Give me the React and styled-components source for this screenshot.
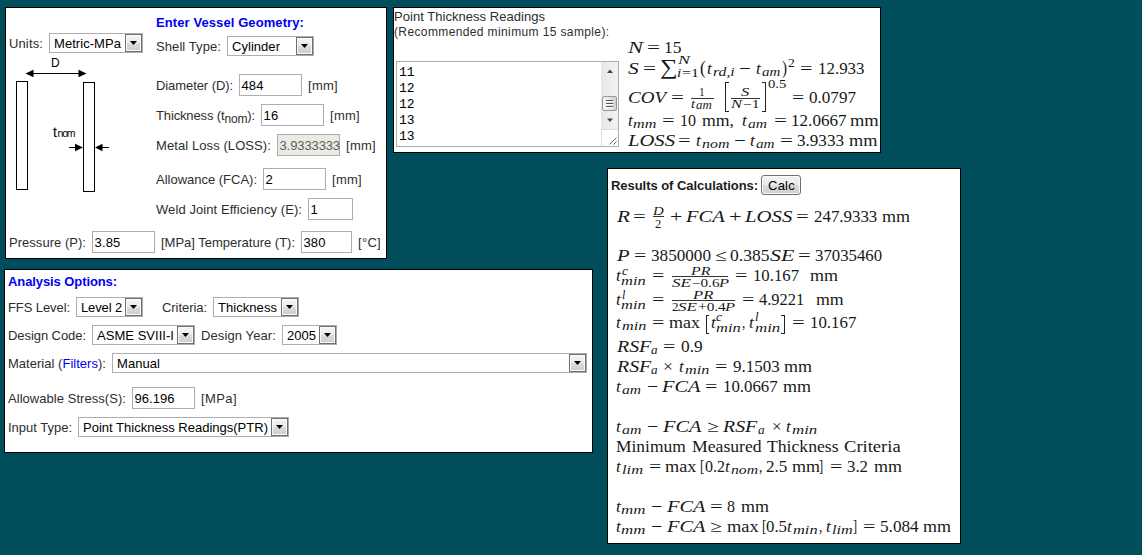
import React, { useLayoutEffect, useRef, useState } from "react";
import styled, { createGlobalStyle, css } from "styled-components";

const GlobalStyle = createGlobalStyle`
  body {
    margin: 0;
    background: #004d5c;
    font-family: "Liberation Sans", Arial, sans-serif;
    font-size: 13px;
    line-height: 16px;
    color: #2e2e2e;
  }
  * { box-sizing: border-box; }
`;

/* ---------- page and panels ---------- */

const Page = styled.main`
  display: grid;
  grid-template-columns: 388px 214px 354px;
  grid-template-rows: 161px 101px 275px;
  width: 1142px;
  height: 555px;
  padding: 7px 0 0 5px;
  align-items: start;
  justify-items: start;
  overflow: hidden;
`;

const Panel = styled.section`
  border: 1px solid #000;
  background: #fff;
`;

const GeometryPanel = styled(Panel)`
  grid-area: 1 / 1 / 3 / 2;
  width: 382px;
  height: 252px;
  padding-left: 3px;
`;

const ReadingsPanel = styled(Panel)`
  grid-area: 1 / 2 / 2 / 4;
  display: flex;
  width: 488px;
  height: 146px;
`;

const OptionsPanel = styled(Panel)`
  grid-area: 3 / 1 / 4 / 3;
  width: 589px;
  height: 184px;
  margin-left: -1px;
  padding: 3px 0 0 3px;
`;

const ResultsPanel = styled(Panel)`
  grid-area: 2 / 3 / 4 / 4;
  width: 354px;
  height: 376px;
  padding-left: 3px;
`;

const Columns = styled.div`
  display: flex;
`;

const SketchColumn = styled.div`
  width: 147px;
  padding-top: 25px;
`;

const FieldColumn = styled.div`
  flex: 1;
  padding-top: 6px;
`;

const Row = styled.div`
  display: flex;
  align-items: center;
  gap: ${(p) => p.$gap || 6}px;
  height: ${(p) => p.$h || 22}px;
  margin-top: ${(p) => p.$mt || 0}px;
`;

/* ---------- fitted text ---------- */

const FitBox = styled.span`
  display: inline-block;
  flex: none;
  width: ${(p) => p.$w}px;
  padding-top: ${(p) => (p.$flat ? 0 : 2)}px;
  white-space: nowrap;
  text-align: left;
`;

const FitInner = styled.span`
  display: inline-block;
  transform-origin: 0 50%;
  white-space: pre;
`;

/* Spreads a run of text over a given width, by tracking or by stretching. */
function Fit({ w, stretch, className, children }) {
  const ref = useRef(null);
  const [style, setStyle] = useState({});
  useLayoutEffect(() => {
    const natural = ref.current.offsetWidth
      ? ref.current.getBoundingClientRect().width
      : w;
    const count = ref.current.textContent.length;
    setStyle(
      stretch
        ? { transform: `scaleX(${w / natural})` }
        : { letterSpacing: `${(w - natural) / count}px` }
    );
  }, [w, stretch]);
  return (
    <FitBox $w={w} $flat={stretch} className={className}>
      <FitInner ref={ref} style={style}>{children}</FitInner>
    </FitBox>
  );
}

const Label = styled(Fit)``;

const Heading = styled(Fit)`
  font-weight: bold;
  color: #0000ee;
`;

const DarkHeading = styled(Fit)`
  font-weight: bold;
  color: #1c1c1c;
`;

const ReadingsTitle = styled(Fit)`
  height: 16px;
  padding-top: 1px;
`;

const SmallLabel = styled(Fit)`
  height: 16px;
  padding-top: 0;
  font-size: 12px;
`;

const Sub = styled.sub`
  font-size: 12px;
  line-height: 0;
  vertical-align: -3px;
`;

const FilterLink = styled.span`
  color: #0000ee;
`;

/* ---------- controls ---------- */

const Field = styled.span`
  display: flex;
  align-items: center;
  flex: none;
  width: ${(p) => p.$w}px;
  height: 22px;
  padding-left: 1.5px;
  border: 1px solid #abadb3;
  background: ${(p) => (p.$off ? "#ebebe4" : "#fff")};
  color: ${(p) => (p.$off ? "#5c5c5c" : "#000")};
`;

const SelectBox = styled.span`
  display: flex;
  align-items: center;
  justify-content: space-between;
  flex: none;
  width: ${(p) => p.$w}px;
  height: 20px;
  padding-left: 4px;
  border: 1px solid #abadb3;
  background: #fff;
  color: #000;
`;

const SelectButton = styled.span`
  display: flex;
  align-items: center;
  justify-content: center;
  width: 17px;
  height: 18px;
  border: 1px solid #707070;
  background: linear-gradient(#f3f3f3, #ebebeb 50%, #dcdcdc 50%, #cdcdcd);
  box-shadow: inset 0 0 0 1px #fafafa;
`;

const CalcButton = styled.button`
  width: 40px;
  height: 20px;
  padding: 0 0 0 6px;
  border: 1px solid #707070;
  border-radius: 3px;
  background: linear-gradient(#f3f3f3, #ebebeb 50%, #dcdcdc 50%, #cfcfcf);
  box-shadow: inset 0 0 0 1px #fafafa;
  color: #000;
  font: 13px/16px "Liberation Sans", Arial, sans-serif;
  text-align: left;
`;

function TextField({ w, tw, value, off }) {
  return (
    <Field $w={w} $off={off}>
      <Fit w={tw}>{value}</Fit>
    </Field>
  );
}

function Select({ w, tw, value }) {
  return (
    <SelectBox $w={w}>
      <Fit w={tw}>{value}</Fit>
      <SelectButton>
        <svg width="7" height="4" viewBox="0 0 7 4">
          <path d="M0 0h7L3.5 4z" fill="#000" />
        </svg>
      </SelectButton>
    </SelectBox>
  );
}

const Spacer = styled.span`
  width: ${(p) => p.$w}px;
`;

/* ---------- readings list ---------- */

const ReadingsColumn = styled.div`
  display: flex;
  flex-direction: column;
  width: 234px;
`;

const ReadingsBox = styled.div`
  display: flex;
  justify-content: space-between;
  width: 223px;
  height: 86px;
  margin: 21px 0 0 2px;
  border: 1px solid #abadb3;
`;

const ReadingsText = styled.div`
  padding: 3px 0 0 2px;
  font: 13px/16px "Liberation Mono", "Courier New", monospace;
  color: #000;
`;

const ScrollColumn = styled.div`
  width: 17px;
  height: 84px;
  display: flex;
  flex-direction: column;
`;

const ScrollTrack = styled.div`
  display: flex;
  flex-direction: column;
  align-items: center;
  height: 67px;
  background: linear-gradient(90deg, #e6e6e6, #f3f3f3);
`;

const ScrollArrow = styled.div`
  display: flex;
  align-items: flex-start;
  justify-content: center;
  height: ${(p) => p.$h}px;
  padding-top: 7px;
`;

const ScrollThumb = styled.div`
  display: flex;
  flex-direction: column;
  justify-content: center;
  align-items: center;
  gap: 1px;
  width: 15px;
  height: 15px;
  border: 1px solid #979797;
  border-radius: 2px;
  background: linear-gradient(90deg, #f5f5f5, #e6e6e6 50%, #cfcfcf);
`;

const Grip = styled.span`
  width: 7px;
  height: 2px;
  border-top: 1px solid #555;
  border-bottom: 1px solid #fff;
`;

const ResizeCorner = styled.div`
  display: flex;
  align-items: flex-end;
  justify-content: flex-end;
  height: 17px;
  padding: 0 1px 1px 0;
  border-top: 1px solid #dcdcdc;
  border-left: 1px solid #dcdcdc;
`;

/* ---------- formulas ---------- */

const FormulaBlock = styled.div`
  padding: ${(p) => p.$pad};
  font-family: "Liberation Serif", "Times New Roman", serif;
  font-size: 16.5px;
  color: #181818;
`;

/* Each line box has room for raised parts; neighbours share that room. */
const FormulaLine = styled.div`
  height: 44px;
  line-height: 44px;
  margin-top: ${(p) => p.$step - 44}px;
  white-space: nowrap;
`;

const Piece = styled.span`
  display: inline-block;
  width: ${(p) => p.$w}px;
  margin-left: ${(p) => p.$gap}px;
  vertical-align: ${(p) => p.$raise}px;
  line-height: 0;
`;

const Glyphs = styled(Fit)`
  ${(p) => p.$kind.includes("i") && css`font-style: italic;`}
  ${(p) => p.$kind.includes("s") && css`font-size: 11.5px;`}
  ${(p) => p.$kind.includes("S") && css`font-size: 21px;`}
  ${(p) => p.$kind.includes("B") && css`font-size: 19.5px;`}
`;

const Bar = styled.span`
  display: block;
  height: 1px;
  background: #333;
`;

/* The negative margin keeps a tall delimiter from growing its line. */
const Bracket = styled.span`
  display: block;
  height: ${(p) => p.$h}px;
  margin-top: -${(p) => p.$h}px;
  border: solid #222;
  border-width: ${(p) => (p.$open ? "1px 0 1px 1px" : "1px 1px 1px 0")};
`;

/* A formula is a list of [text, start, end, kind, raise].
   kind: i italic, s script size, S sum sign, B taller delimiter,
   "bar" a fraction rule, "[" and "]" the large delimiters. */
function Formula({ step, parts }) {
  let cursor = 0;
  return (
    <FormulaLine $step={step}>
      {parts.map(([text, start, end, kind = "", raise = 0], i) => {
        const drawn = kind === "bar" || kind === "[" || kind === "]";
        const pad = drawn ? 0 : 0.5;
        const gap = start - pad - cursor;
        const w = end - start + pad * 2;
        cursor = end + pad;
        return (
          <Piece key={i} $w={w} $gap={gap} $raise={raise}>
            {kind === "bar" && <Bar />}
            {(kind === "[" || kind === "]") && <Bracket $h={text} $open={kind === "["} />}
            {!drawn && <Glyphs w={w} stretch $kind={kind}>{text}</Glyphs>}
          </Piece>
        );
      })}
    </FormulaLine>
  );
}

const t = (x) => ["t", x, x + 3.8, "i"];
const RSFa = (x) => [["RSF", x, x + 33.3, "i"], ["a", x + 34.7, x + 40.3, "is", -2]];

const statistics = [
  { step: 16, parts: [["N", 0, 14, "i"], ["=", 19.5, 31.5], ["15", 36.5, 53]] },
  { step: 20.5, parts: [
    ["S", 0, 9.7, "i"], ["=", 15.3, 27.3], ["∑", 32.7, 49.3, "S"],
    ["N", 50.3, 61.3, "is", 9.5], ["i", 49.7, 53, "is", -3.5], ["=1", 55, 71, "s", -3.5],
    ["(", 73, 77.7, "B"], t(79.5), ["rd,i", 85.3, 106, "is", -2], ["−", 112, 122.7],
    t(128.7), ["am", 134.5, 151.8, "is", -2], [")", 154.7, 158.7, "B"],
    ["2", 160.7, 166.5, "s", 7], ["=", 173, 184.5], ["12.933", 190.5, 236]] },
  { step: 29, parts: [
    ["COV", 0, 37, "i"], ["=", 43.5, 55.5], ["", 62.7, 86, "bar", 4],
    ["1", 72, 76.7, "s", 7], ["t", 63.7, 66.7, "is", -5.5], ["am", 68.3, 83, "is", -6.5],
    [30, 96.7, 100.7, "[", -9], ["", 103, 131.7, "bar", 4], ["S", 113.7, 121, "is", 7],
    ["N", 103.7, 113.7, "is", -5], ["−1", 115.7, 131.3, "s", -5], [30, 133.7, 137.7, "]", -9],
    ["0.5", 141, 158.3, "s", 15], ["=", 164.7, 176], ["0.0797", 181.3, 227.3]] },
  { step: 23.5, parts: [
    t(0), ["mm", 5.7, 28, "is", -2], ["=", 34.7, 46.3], ["10", 52.7, 67.7],
    ["mm,", 74.3, 105.3], t(115), ["am", 120.7, 138.7, "is", -2], ["=", 146.3, 158.3],
    ["12.0667", 163.7, 218.3], ["mm", 223, 250.7]] },
  { step: 20, parts: [
    ["LOSS", 0, 46, "i"], ["=", 50.7, 62.3], t(69), ["nom", 74.3, 100.7, "is", -2],
    ["−", 106.3, 117], t(122.3), ["am", 128.7, 146.3, "is", -2], ["=", 152.7, 164.7],
    ["3.9333", 169.3, 215.3], ["mm", 221.3, 248.7]] },
];

const results = [
  { step: 16, parts: [
    ["R", 0.7, 12.7, "i"], ["=", 17.3, 29], ["", 36.7, 47.7, "bar", 5],
    ["D", 37.3, 47, "is", 7.5], ["2", 39, 44.3, "s", -5.5], ["+", 54, 65.3],
    ["FCA", 70.3, 108, "i"], ["+", 112.7, 124.3], ["LOSS", 129.3, 175.7, "i"],
    ["=", 180.3, 192], ["247.9333", 197.7, 260], ["mm", 265.7, 292.7]] },
  { step: 39, parts: [
    ["P", 0.7, 12.3, "i"], ["=", 18, 29.3], ["3850000", 34.7, 93.7], ["≤", 98.7, 109.3],
    ["0.385", 114.3, 152.7], ["SE", 154, 177.3, "i"], ["=", 182, 193.7], ["37035460", 199.3, 265.3]] },
  { step: 20, parts: [
    t(0.3), ["c", 6, 11, "is", 6.5], ["min", 5.3, 29, "is", -4], ["=", 36.3, 47.7],
    ["", 55.7, 111.7, "bar", 4], ["PR", 75, 93.3, "is", 6], ["SE", 56, 74, "is", -6],
    ["−0.6", 75.5, 102, "s", -6], ["P", 102.7, 111.7, "is", -6], ["=", 119, 130.3],
    ["10.167", 137.3, 182.3], ["mm", 193.7, 220.7]] },
  { step: 24, parts: [
    t(0.3), ["l", 6.3, 8.7, "is", 6.5], ["min", 5.3, 29, "is", -4], ["=", 36.3, 47.7],
    ["", 55.7, 118.7, "bar", 4], ["PR", 77, 96.3, "is", 6], ["2", 56, 61.5, "s", -5.5],
    ["SE", 62.5, 80.5, "is", -5.5], ["+0.4", 81.7, 108.5, "s", -5.5], ["P", 109.3, 118.3, "is", -5.5],
    ["=", 126.3, 137.7], ["4.9221", 142.7, 187], ["mm", 200, 226.7]] },
  { step: 22.5, parts: [
    t(0.3), ["min", 5.7, 29, "is", -2], ["=", 36.3, 47.7], ["max", 53.3, 83.3],
    [19, 89.3, 92.7, "[", -6], t(94.7), ["c", 100, 105, "is", 6.5], ["min", 100, 123.7, "is", -4],
    [",", 126, 128.3], t(133), ["l", 138.7, 141.3, "is", 6.5], ["min", 139, 163.3, "is", -4],
    [19, 164.7, 168.3, "]", -6], ["=", 176, 187.7], ["10.167", 194, 239.3]] },
  { step: 24.5, parts: [...RSFa(0.7), ["=", 47.3, 58.7], ["0.9", 64.7, 85.3]] },
  { step: 20, parts: [
    ...RSFa(0.7), ["×", 47.3, 56.3], t(62.7), ["min", 69, 92.3, "is", -2],
    ["=", 99.3, 110.7], ["9.1503", 116.7, 162.3], ["mm", 167.7, 194.7]] },
  { step: 20, parts: [
    t(0.3), ["am", 5.7, 23.7, "is", -2], ["−", 31, 41], ["FCA", 46.3, 83.7, "i"],
    ["=", 89.3, 100.7], ["10.0667", 107, 160.7], ["mm", 166.7, 193.7]] },
  { step: 40, parts: [
    t(0.3), ["am", 5.7, 24, "is", -2], ["−", 31, 41], ["FCA", 47, 84.3, "i"],
    ["≥", 90.7, 101.3], ...RSFa(107.5), ["×", 155.7, 164.3], t(169.7),
    ["min", 175.7, 200, "is", -2]] },
  { step: 20, parts: [
    ["Minimum", 0, 68.7], ["Measured", 76, 144.7], ["Thickness", 150.7, 221.3],
    ["Criteria", 228, 283.7]] },
  { step: 20, parts: [
    t(0.3), ["lim", 5.7, 25.7, "is", -2], ["=", 32.7, 44], ["max", 49.3, 79.7],
    ["[", 84.3, 87.7], ["0.2", 89, 108], t(108.7), ["nom", 114.7, 140.7, "is", -2],
    [",", 143.3, 145.7], ["2.5", 150, 170.3], ["mm", 176.3, 203.3], ["]", 203.5, 206.7],
    ["=", 214.3, 225.7], ["3.2", 231, 251], ["mm", 257.7, 284.7]] },
  { step: 39.5, parts: [
    t(0.3), ["mm", 5.3, 28.7, "is", -2], ["−", 35, 45.3], ["FCA", 51.3, 88.7, "i"],
    ["=", 94, 105.7], ["8", 110.7, 117.7], ["mm", 124.7, 151.7]] },
  { step: 20.5, parts: [
    t(0.3), ["mm", 5.3, 28.7, "is", -2], ["−", 35, 45.3], ["FCA", 51.3, 88.7, "i"],
    ["≥", 94.3, 105], ["max", 110.7, 141.3], ["[", 145.8, 149.2], ["0.5", 150, 170],
    t(170.7), ["min", 176.7, 200.3, "is", -2], [",", 203.3, 205.7], t(210.3),
    ["lim", 216, 235.7, "is", -2], ["]", 236.7, 239.8], ["=", 247.3, 258.7],
    ["5.084", 264, 301.7], ["mm", 307, 334]] },
];

/* ---------- vessel wall sketch ---------- */

const SketchSvg = styled.svg`
  display: block;
  font-family: "Liberation Sans", Arial, sans-serif;
`;

function WallSketch() {
  return (
    <SketchSvg width="130" height="145" viewBox="9 53 130 145">
      <g fill="#fff" stroke="#000">
        <rect x="16.5" y="81.5" width="11" height="108" />
        <rect x="83.5" y="82.5" width="11" height="109" />
        <path d="M28 73.5H84M69 147.5H80M98 147.5H109" />
      </g>
      <path d="M25.5 73.5l8-3.7v7.4zM86.5 73.5l-8-3.7v7.4zM83 147.5l-8-3.8v7.6zM95 147.5l7.5-3.8v7.6z" />
      <text x="51" y="67" fontSize="12">D</text>
      <text x="53" y="137" fontSize="14">t</text>
      <text x="57.5" y="136.5" fontSize="10.5" textLength="18">nom</text>
    </SketchSvg>
  );
}

export default function App() {
  return (
    <>
      <GlobalStyle />
      <Page>
        <GeometryPanel>
          <Columns>
            <SketchColumn>
              <Row $h={20}>
                <Label w={34}>Units:</Label>
                <Select w={94} tw={67} value="Metric-MPa" />
              </Row>
              <WallSketch />
            </SketchColumn>
            <FieldColumn>
              <Row $h={16}><Heading w={148}>Enter Vessel Geometry:</Heading></Row>
              <Row $h={20} $mt={6}>
                <Label w={65}>Shell Type:</Label>
                <Select w={87} tw={48} value="Cylinder" />
              </Row>
              <Row $mt={18}>
                <Label w={77}>Diameter (D):</Label>
                <TextField w={63} tw={22} value="484" />
                <Label w={30}>[mm]</Label>
              </Row>
              <Row $mt={8}>
                <Label w={99}>Thickness (t<Sub>nom</Sub>):</Label>
                <TextField w={63} tw={15} value="16" />
                <Label w={30}>[mm]</Label>
              </Row>
              <Row $mt={8}>
                <Label w={115}>Metal Loss (LOSS):</Label>
                <TextField w={63} tw={60.5} value="3.9333333" off />
                <Label w={30}>[mm]</Label>
              </Row>
              <Row $mt={12}>
                <Label w={101}>Allowance (FCA):</Label>
                <TextField w={63} tw={8} value="2" />
                <Label w={30}>[mm]</Label>
              </Row>
              <Row $mt={8}>
                <Label w={146}>Weld Joint Efficiency (E):</Label>
                <TextField w={45} tw={8} value="1" />
              </Row>
            </FieldColumn>
          </Columns>
          <Row $mt={11}>
            <Label w={77}>Pressure (P):</Label>
            <TextField w={63} tw={26} value="3.85" />
            <Label w={134}>[MPa] Temperature (T):</Label>
            <TextField w={51} tw={22} value="380" />
            <Label w={23}>[°C]</Label>
          </Row>
        </GeometryPanel>

        <ReadingsPanel>
          <ReadingsColumn>
            <ReadingsTitle w={151}>Point Thickness Readings</ReadingsTitle>
            <SmallLabel w={215.5}>(Recommended minimum 15 sample):</SmallLabel>
            <ReadingsBox>
              <ReadingsText>
                {["11", "12", "12", "13", "13"].map((v, i) => <div key={i}>{v}</div>)}
              </ReadingsText>
              <ScrollColumn>
                <ScrollTrack>
                  <ScrollArrow $h={34}>
                    <svg width="6" height="4" viewBox="0 0 6 4"><path d="M0 4L3 .5L6 4z" fill="#444" /></svg>
                  </ScrollArrow>
                  <ScrollThumb><Grip /><Grip /><Grip /></ScrollThumb>
                  <ScrollArrow $h={18}>
                    <svg width="6" height="4" viewBox="0 0 6 4"><path d="M0 .5L3 4L6 .5z" fill="#444" /></svg>
                  </ScrollArrow>
                </ScrollTrack>
                <ResizeCorner>
                  <svg width="8" height="8" viewBox="0 0 8 8"><path d="M.5 7.5L7.5 .5M4.5 7.5L7.5 4.5" stroke="#666" fill="none" /></svg>
                </ResizeCorner>
              </ScrollColumn>
            </ReadingsBox>
          </ReadingsColumn>
          <FormulaBlock $pad="46px 0 0 0">
            {statistics.map((f, i) => <Formula key={i} {...f} />)}
          </FormulaBlock>
        </ReadingsPanel>

        <OptionsPanel>
          <Row $h={16}><Heading w={109}>Analysis Options:</Heading></Row>
          <Row $h={20} $mt={8}>
            <Label w={62}>FFS Level:</Label>
            <Select w={67} tw={41} value="Level 2" />
            <Spacer $w={7} />
            <Label w={45}>Criteria:</Label>
            <Select w={86} tw={59} value="Thickness" />
          </Row>
          <Row $h={20} $mt={8}>
            <Label w={78}>Design Code:</Label>
            <Select w={103} tw={77} value="ASME SVIII-I" />
            <Label w={75}>Design Year:</Label>
            <Select w={55} tw={29} value="2005" />
          </Row>
          <Row $h={20} $mt={8}>
            <Label w={98}>Material (<FilterLink>Filters</FilterLink>):</Label>
            <Select w={475} tw={43} value="Manual" />
          </Row>
          <Row $mt={14}>
            <Label w={118}>Allowable Stress(S):</Label>
            <TextField w={63} tw={40} value="96.196" />
            <Label w={36}>[MPa]</Label>
          </Row>
          <Row $h={20} $mt={8}>
            <Label w={64}>Input Type:</Label>
            <Select w={211} tw={185} value="Point Thickness Readings(PTR)" />
          </Row>
        </OptionsPanel>

        <ResultsPanel>
          <Row $h={20} $mt={6} $gap={3}>
            <DarkHeading w={147}>Results of Calculations:</DarkHeading>
            <CalcButton><Fit w={27}>Calc</Fit></CalcButton>
          </Row>
          <FormulaBlock $pad="28px 0 0 5.5px">
            {results.map((f, i) => <Formula key={i} {...f} />)}
          </FormulaBlock>
        </ResultsPanel>
      </Page>
    </>
  );
}
